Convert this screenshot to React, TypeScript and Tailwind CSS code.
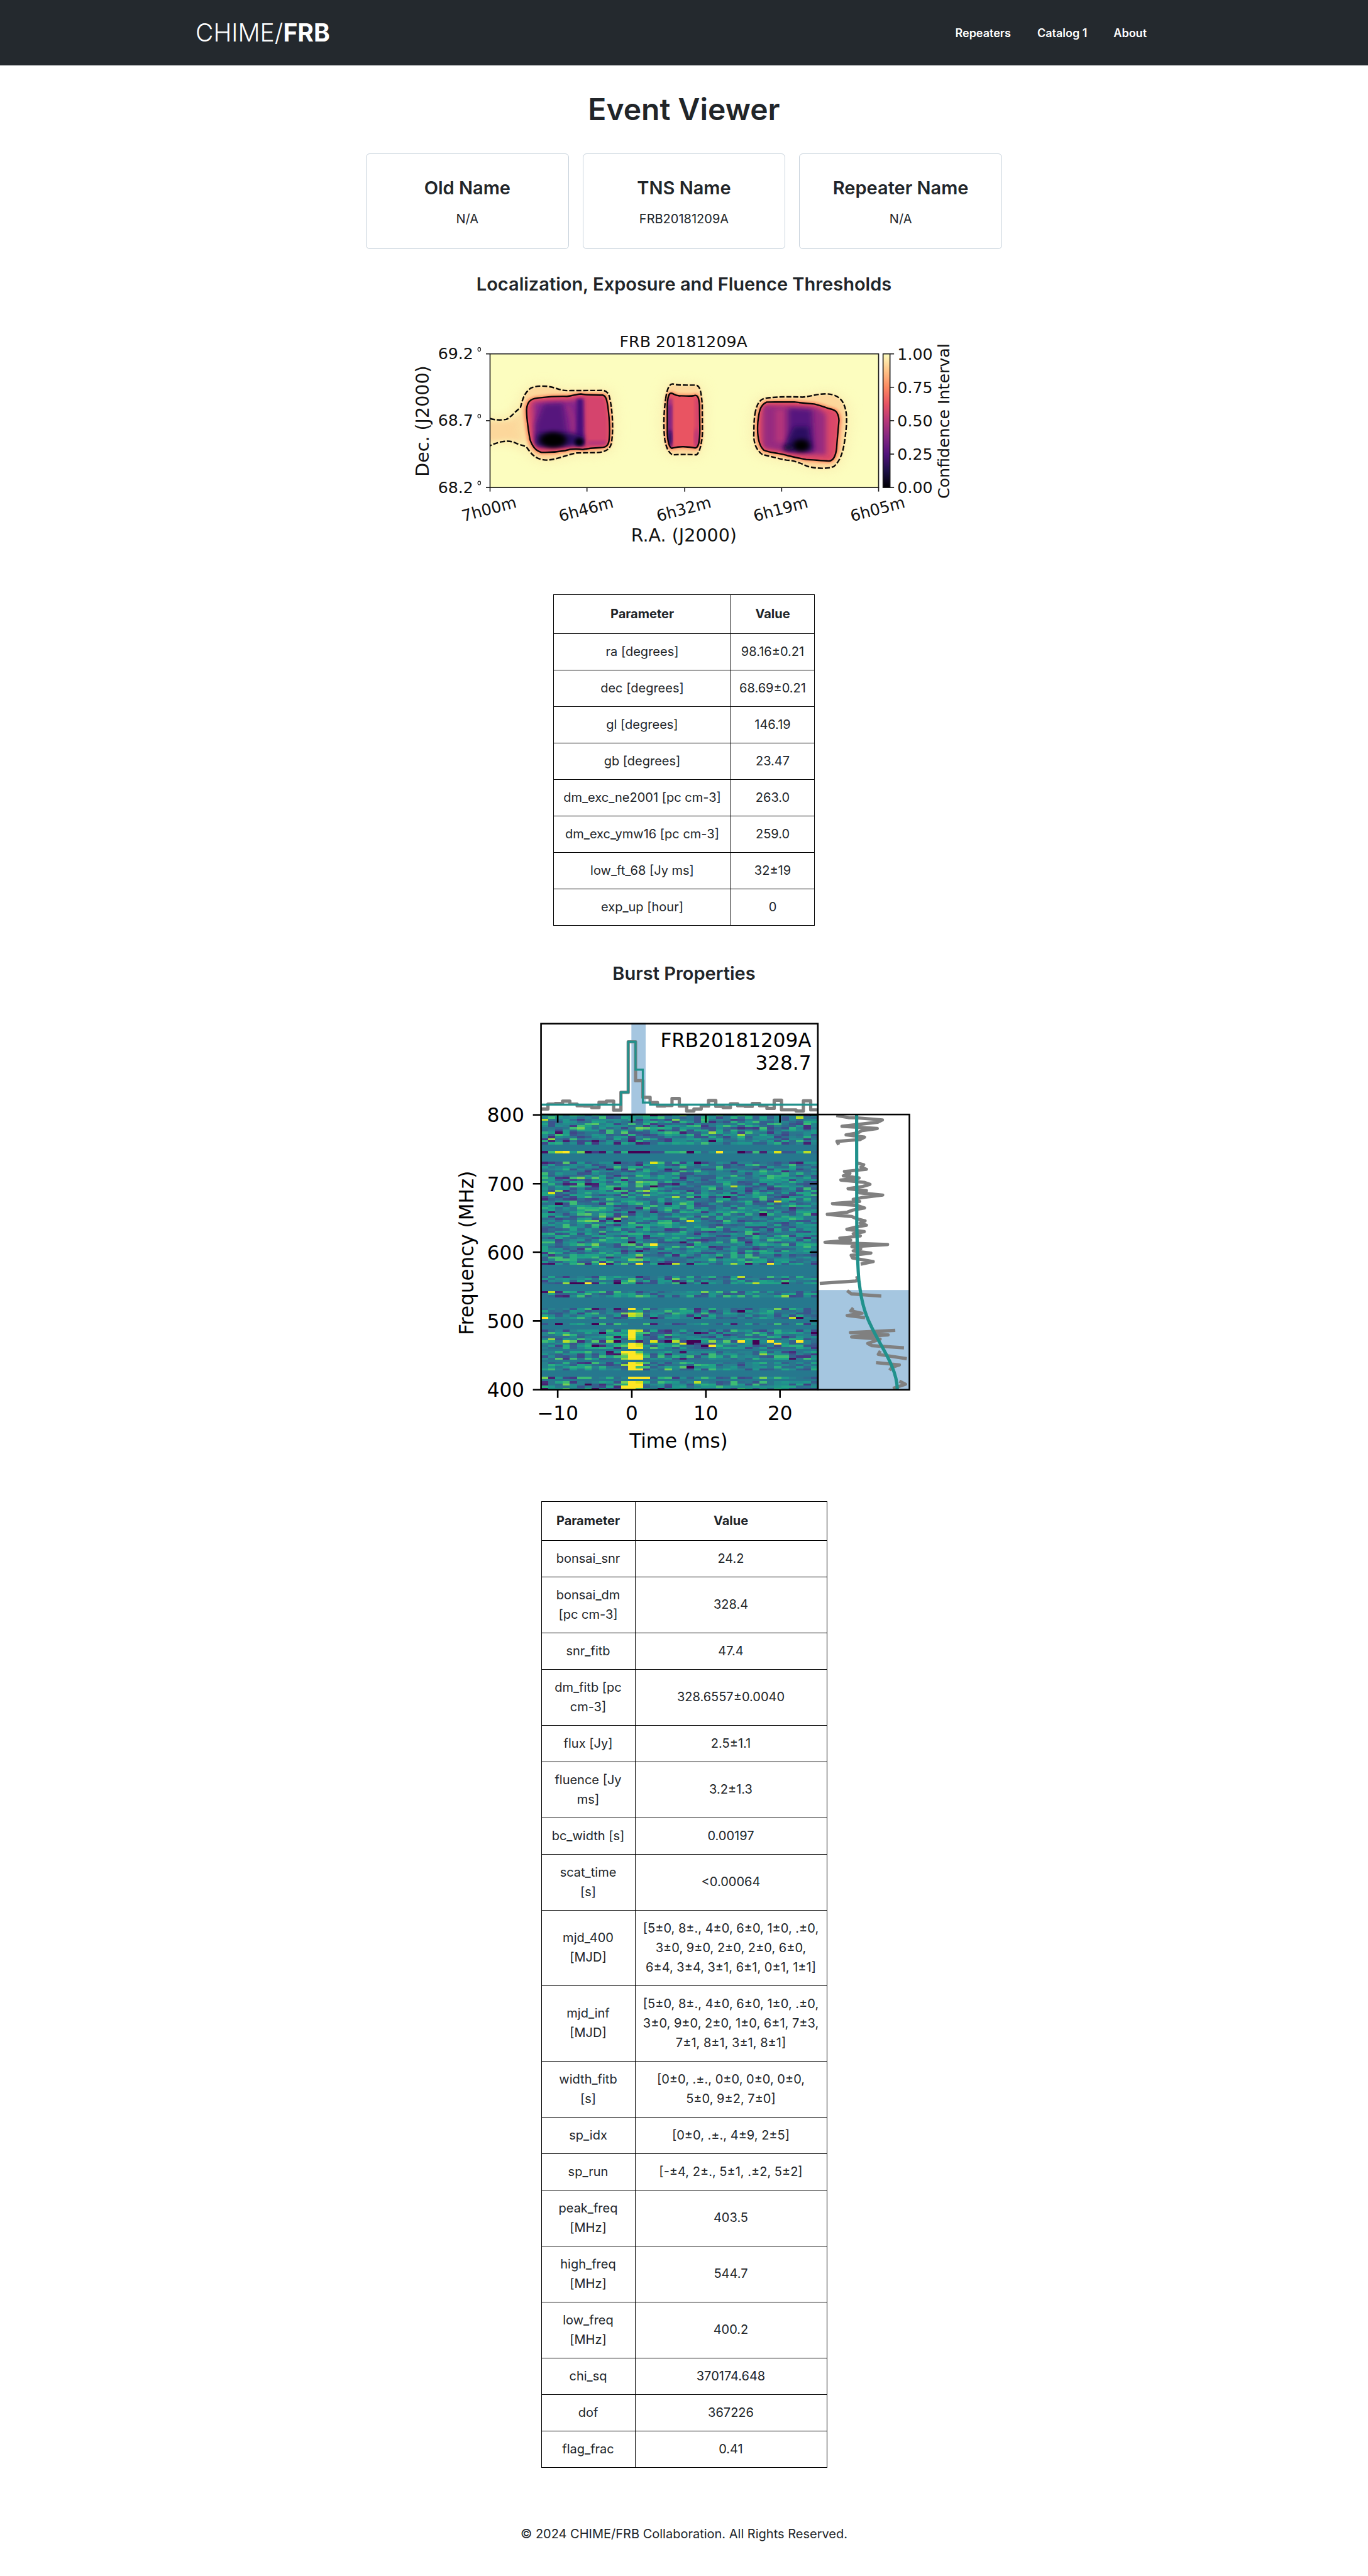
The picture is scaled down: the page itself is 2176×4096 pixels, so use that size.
import React from "react";

type Row = [string, string];

const LOCALIZATION_ROWS: Row[] = [
  ["ra [degrees]", "98.16±0.21"],
  ["dec [degrees]", "68.69±0.21"],
  ["gl [degrees]", "146.19"],
  ["gb [degrees]", "23.47"],
  ["dm_exc_ne2001 [pc cm-3]", "263.0"],
  ["dm_exc_ymw16 [pc cm-3]", "259.0"],
  ["low_ft_68 [Jy ms]", "32±19"],
  ["exp_up [hour]", "0"],
];

const BURST_ROWS: Row[] = [
  ["bonsai_snr", "24.2"],
  ["bonsai_dm [pc cm-3]", "328.4"],
  ["snr_fitb", "47.4"],
  ["dm_fitb [pc cm-3]", "328.6557±0.0040"],
  ["flux [Jy]", "2.5±1.1"],
  ["fluence [Jy ms]", "3.2±1.3"],
  ["bc_width [s]", "0.00197"],
  ["scat_time\n[s]", "<0.00064"],
  [
    "mjd_400 [MJD]",
    "[5±0, 8±., 4±0, 6±0, 1±0, .±0, 3±0, 9±0, 2±0, 2±0, 6±0, 6±4, 3±4, 3±1, 6±1, 0±1, 1±1]",
  ],
  [
    "mjd_inf [MJD]",
    "[5±0, 8±., 4±0, 6±0, 1±0, .±0, 3±0, 9±0, 2±0, 1±0, 6±1, 7±3, 7±1, 8±1, 3±1, 8±1]",
  ],
  ["width_fitb\n[s]", "[0±0, .±., 0±0, 0±0, 0±0, 5±0, 9±2, 7±0]"],
  ["sp_idx", "[0±0, .±., 4±9, 2±5]"],
  ["sp_run", "[-±4, 2±., 5±1, .±2, 5±2]"],
  ["peak_freq [MHz]", "403.5"],
  ["high_freq [MHz]", "544.7"],
  ["low_freq [MHz]", "400.2"],
  ["chi_sq", "370174.648"],
  ["dof", "367226"],
  ["flag_frac", "0.41"],
];

const CARDS: Row[] = [
  ["Old Name", "N/A"],
  ["TNS Name", "FRB20181209A"],
  ["Repeater Name", "N/A"],
];

function ParameterTable({ rows, label, className, first }: { rows: Row[]; label: string; className: string; first: string }) {
  return (
    <table aria-label={label} className={`border-collapse text-center text-[20px] leading-[31px] ${className}`}>
      <thead>
        <tr>
          <th scope="col" className={`border border-black px-3 py-[15px] font-bold ${first}`}>Parameter</th>
          <th scope="col" className="border border-black px-3 py-[15px] font-bold">Value</th>
        </tr>
      </thead>
      <tbody>
        {rows.map(([name, value]) => (
          <tr key={name}>
            <td className="border border-black px-3 py-[13px] whitespace-pre-line">{name}</td>
            <td className="border border-black px-3 py-[13px]">{value}</td>
          </tr>
        ))}
      </tbody>
    </table>
  );
}

/* ---------- localization map ---------- */

const REGION_A =
  "M645,590 C648,545 660,522 700,516 C740,510 770,503 850,505 C880,503 895,490 920,490 C945,497 1000,495 1030,497 C1048,502 1052,530 1057,570 C1064,640 1068,740 1062,795 C1058,820 1048,832 1020,834 C980,836 960,838 930,846 C890,840 860,845 840,853 C800,862 760,866 720,864 C690,855 672,820 662,780 C654,720 645,640 645,590Z";
const OUTER_A =
  "M460,647 C480,658 520,658 542,653 C565,640 590,600 614,577 C622,540 630,480 670,450 C700,435 750,435 790,452 C815,462 830,470 870,468 L1035,467 C1060,475 1065,500 1070,540 C1082,620 1085,740 1074,810 C1065,850 1040,862 1000,866 L900,868 C850,878 800,912 745,914 C690,910 670,875 650,840 C640,820 620,820 600,810 C570,790 550,790 520,796 C495,803 475,812 460,822";
const REGION_B =
  "M1358,560 C1360,510 1365,485 1378,485 C1392,488 1395,500 1420,502 C1450,500 1470,508 1495,500 C1510,493 1518,510 1521,560 L1523,720 C1522,790 1518,835 1500,836 C1480,832 1465,830 1440,828 C1410,827 1400,832 1380,838 C1365,830 1360,790 1358,740 Z";
const OUTER_B =
  "M1350,520 C1355,470 1365,425 1385,425 C1410,435 1450,433 1505,433 C1525,440 1530,480 1535,560 L1536,740 C1534,800 1522,870 1505,880 C1460,876 1420,878 1385,880 C1360,865 1350,820 1345,780 C1338,700 1340,600 1350,520Z";
const REGION_C =
  "M455,670 C460,610 465,560 500,542 C550,540 600,543 640,541 C670,546 700,550 740,554 C775,563 800,580 835,590 C860,600 865,630 866,660 C862,720 856,790 854,840 C850,880 838,918 815,920 C780,918 740,913 700,910 C650,900 600,882 560,872 C530,865 500,860 485,850 C460,820 450,760 455,670Z";
const OUTER_C =
  "M440,620 C450,550 465,520 500,516 C560,507 620,507 680,510 C730,505 740,492 800,489 C850,490 880,520 890,555 C910,610 906,680 898,760 C890,840 880,910 840,955 C800,975 740,965 710,955 C670,935 640,915 600,914 C540,900 510,885 480,880 C445,850 432,800 435,740 C435,700 436,650 440,620Z";

const MAGMA: [number, string][] = [
  [0, "#fcfdbf"],
  [0.125, "#fec488"],
  [0.25, "#fc8961"],
  [0.375, "#e75263"],
  [0.5, "#b73779"],
  [0.625, "#832681"],
  [0.75, "#51127c"],
  [0.875, "#1d1147"],
  [1, "#000004"],
];

const RA_TICKS: [number, string][] = [
  [1203, "7h00m"],
  [1441, "6h46m"],
  [1681, "6h32m"],
  [1919, "6h19m"],
  [2157, "6h05m"],
];
const DEC_TICKS: [number, string][] = [
  [869, "69.2"],
  [1033, "68.7"],
  [1197, "68.2"],
];
const BAR_TICKS: [number, string][] = [
  [869, "1.00"],
  [951, "0.75"],
  [1033, "0.50"],
  [1115, "0.25"],
  [1197, "0.00"],
];

function Halo({ outer, inner }: { outer: string; inner: string }) {
  return (
    <>
      <path d={outer} fill="#fbeaab" stroke="#fbeaab" strokeWidth="44" filter="url(#blur30)" opacity="0.55" />
      <path d={outer} fill="#fdd79b" filter="url(#blur8)" />
      <path d={inner} fill="#fc8961" stroke="#fc8961" strokeWidth="24" filter="url(#blur8)" />
    </>
  );
}

function Contours({ outer, inner }: { outer: string; inner: string }) {
  return (
    <g fill="none" stroke="#080808" strokeWidth="2.4">
      <path d={inner} vectorEffect="non-scaling-stroke" />
      <path d={outer} vectorEffect="non-scaling-stroke" strokeDasharray="8 3" />
    </g>
  );
}

function LocalizationPlot() {
  return (
    <svg
      viewBox="980 780 1400 600"
      role="img"
      aria-label="FRB 20181209A localization"
      className="mt-[35px] w-full max-w-[907px] font-['DejaVu_Sans',sans-serif]"
    >
      <defs>
        <linearGradient id="magma" x1="0" y1="0" x2="0" y2="1">
          {MAGMA.map(([o, c]) => (
            <stop key={o} offset={o} stopColor={c} />
          ))}
        </linearGradient>
        <filter id="blur8" x="-30%" y="-30%" width="160%" height="160%"><feGaussianBlur stdDeviation="8" /></filter>
        <filter id="blur14" x="-60%" y="-60%" width="220%" height="220%"><feGaussianBlur stdDeviation="14" /></filter>
        <filter id="blur30" x="-60%" y="-60%" width="220%" height="220%"><feGaussianBlur stdDeviation="30" /></filter>
        <clipPath id="axes"><rect x="1203" y="869" width="954" height="328" /></clipPath>
        <clipPath id="clipA"><path d={REGION_A} /></clipPath>
        <clipPath id="clipB"><path d={REGION_B} /></clipPath>
        <clipPath id="clipC"><path d={REGION_C} /></clipPath>
      </defs>

      <g clipPath="url(#axes)">
        <rect x="1203" y="869" width="954" height="328" fill="#fcfdbf" />
        <g transform="translate(980 780) scale(0.4847 0.3827)">
          <path d="M380,640 L540,640 L640,540 L640,850 L540,800 L380,830Z" fill="#fbeaab" filter="url(#blur30)" />
          <path d="M380,670 L560,665 L640,590 L640,800 L560,780 L380,800Z" fill="#fcd79b" filter="url(#blur14)" />
          <Halo outer={`M614,577 ${OUTER_A.slice(OUTER_A.indexOf("C622"), OUTER_A.indexOf("C640,820"))}Z`} inner={REGION_A} />
          <Halo outer={OUTER_B} inner={REGION_B} />
          <g clipPath="url(#clipA)">
            <rect x="620" y="460" width="480" height="430" fill="#d5446d" />
            <path d="M680,545 L860,535 L930,520 L930,820 L690,820Z" fill="#87278a" filter="url(#blur14)" />
            <path d="M730,555 L830,550 L860,820 L695,820 L690,690Z" fill="#56147d" filter="url(#blur14)" />
            <path d="M900,520 L932,520 L936,820 L895,820Z" fill="#4a107a" filter="url(#blur8)" />
            <path d="M860,560 C895,620 895,730 875,790 L862,780 C878,720 870,640 845,570Z" fill="#962c80" filter="url(#blur8)" />
            <path d="M700,740 L870,740 L930,760 L935,822 L690,822Z" fill="#2a0f61" filter="url(#blur14)" />
            <ellipse cx="780" cy="785" rx="68" ry="50" fill="#000004" filter="url(#blur14)" />
            <ellipse cx="912" cy="797" rx="22" ry="26" fill="#02020d" filter="url(#blur8)" />
            <rect x="955" y="790" width="100" height="30" fill="#b73779" filter="url(#blur8)" />
            <path d={REGION_A} fill="none" stroke="#ee5b5e" strokeWidth="14" filter="url(#blur8)" />
          </g>
          <g clipPath="url(#clipB)">
            <rect x="1340" y="460" width="200" height="400" fill="#e95462" />
            <rect x="1358" y="520" width="26" height="320" fill="#a3307e" filter="url(#blur8)" />
            <rect x="1360" y="560" width="20" height="240" fill="#7a2281" filter="url(#blur8)" />
            <ellipse cx="1371" cy="775" rx="10" ry="55" fill="#2a0f61" filter="url(#blur8)" />
            <ellipse cx="1508" cy="770" rx="12" ry="60" fill="#a8327d" filter="url(#blur8)" />
            <rect x="1498" y="520" width="26" height="300" fill="#cb3e71" opacity="0.7" filter="url(#blur8)" />
          </g>
          <Contours outer={OUTER_A} inner={REGION_A} />
          <Contours outer={OUTER_B} inner={REGION_B} />
        </g>
        <g transform="translate(1640 780) scale(0.4847 0.3827)">
          <Halo outer={OUTER_C} inner={REGION_C} />
          <g clipPath="url(#clipC)">
            <rect x="430" y="520" width="460" height="420" fill="#da4769" />
            <path d="M480,560 L760,580 L800,620 L800,880 L640,870 L480,835Z" fill="#962c80" filter="url(#blur14)" />
            <rect x="545" y="590" width="45" height="210" fill="#b5367a" filter="url(#blur14)" />
            <path d="M610,580 L730,590 L740,850 L610,850Z" fill="#57157e" filter="url(#blur14)" />
            <path d="M640,700 L710,700 L730,860 L590,850 L600,800Z" fill="#2a0f61" filter="url(#blur14)" />
            <ellipse cx="675" cy="820" rx="42" ry="40" fill="#000004" filter="url(#blur14)" />
            <ellipse cx="612" cy="835" rx="26" ry="16" fill="#120d31" filter="url(#blur14)" />
            <path d={REGION_C} fill="none" stroke="#ee5b5e" strokeWidth="12" filter="url(#blur8)" />
          </g>
          <Contours outer={OUTER_C} inner={REGION_C} />
        </g>
      </g>

      <g fill="none" stroke="#1a1a1a" strokeWidth="2.5">
        <rect x="1203" y="869" width="954" height="328" />
        <rect x="2168" y="869" width="17" height="328" fill="url(#magma)" />
        {RA_TICKS.map(([x]) => <path key={x} d={`M${x} 1197V1207`} />)}
        {DEC_TICKS.map(([y]) => <path key={y} d={`M1193 ${y}H1203`} />)}
        {BAR_TICKS.map(([y]) => <path key={y} d={`M2185 ${y}H2195`} />)}
      </g>

      <g fill="#111" fontSize="39">
        <text x="1678" y="852" textAnchor="middle">FRB 20181209A</text>
        {DEC_TICKS.map(([y, t]) => (
          <React.Fragment key={y}>
            <text x="1162" y={y + 13} textAnchor="end">{t}</text>
            <ellipse cx="1176.5" cy={y - 11} rx="3.5" ry="4.5" fill="none" stroke="#111" strokeWidth="1.6" />
          </React.Fragment>
        ))}
        {RA_TICKS.map(([x, t]) => (
          <text key={x} transform={`translate(${x + 1} 1263) rotate(-15)`} textAnchor="middle">{t}</text>
        ))}
        {BAR_TICKS.map(([y, t]) => <text key={y} x="2203" y={y + 14}>{t}</text>)}
        <text transform="translate(2330 1034) rotate(-90)" textAnchor="middle">Confidence Interval</text>
        <text x="1679" y="1330" textAnchor="middle" fontSize="44">R.A. (J2000)</text>
        <text transform="translate(1052 1034) rotate(-90)" textAnchor="middle" fontSize="44">Dec. (J2000)</text>
      </g>
    </svg>
  );
}

/* ---------- dynamic spectrum ---------- */

const VIRIDIS = [
  "#440154", "#471164", "#482071", "#472e7c", "#443b84", "#3f4889", "#3a548c", "#34608d", "#2f6c8e", "#2a768e",
  "#26828e", "#228c8d", "#1f978b", "#20a386", "#29af7f", "#3dbc74", "#56c667", "#75d054", "#95d840", "#bade28",
  "#dde318", "#fde725",
];

const MASKED = new Set([
  14, 15, 16, 18, 19, 20, 21, 70, 71, 72, 73, 74, 79, 80, 81, 85, 86, 87, 88, 89, 95, 96, 98, 99, 109, 114, 119, 120,
  121, 123,
]);

const COLS = 38;
const ROWS = 128;

/* Channel rows with strong cells: "column:level" pairs, level indexes VIRIDIS. */
const STRONG: Record<number, string> = {
  0: "15:0 19:17",
  1: "35:19 8:15",
  2: "0:19 18:17",
  4: "6:15 7:16",
  6: "4:15 5:17 13:17 14:16",
  8: "2:1 9:15 11:16 19:2 23:18",
  9: "27:18",
  11: "1:18 4:15",
  12: "1:2 3:2 7:1 12:2 13:14 23:0",
  13: "10:2 13:2 14:3 36:2",
  17: "0:1 1:15 2:20 3:21 4:12 5:17 6:0 7:4 8:1 9:12 10:3 11:14 12:0 13:0 14:0 15:6 17:14 19:15 20:0 24:21 27:0 30:2 32:20 36:19",
  22: "0:2 3:16 10:0 15:20 19:5 21:0 35:2",
  25: "9:2 17:2",
  29: "5:17 7:16 0:15",
  31: "13:17 14:15",
  32: "3:2 6:1 7:2 18:2",
  33: "4:15 9:15 13:16 15:0 26:19",
  34: "10:1 15:15",
  35: "2:17 14:18",
  36: "1:20",
  37: "14:17",
  38: "18:18 6:15 25:0",
  40: "32:20",
  41: "2:0 17:2 19:16",
  45: "1:2 12:2",
  46: "6:16 8:15 30:0",
  47: "8:17 11:17",
  48: "10:17 9:2",
  49: "10:0 20:20 6:17 7:17",
  59: "12:0 19:1",
  60: "7:17 12:16 15:21",
  63: "13:1",
  65: "13:17",
  67: "12:17 13:17 2:15 3:15",
  69: "0:2 1:1 5:16 6:3 8:21 9:2 11:16 13:21 16:0 17:1 18:19 20:1 26:18 28:1 31:21",
  75: "27:19 3:4",
  76: "12:15 18:17",
  77: "10:2 12:17",
  78: "3:18 4:0 5:0 6:21 7:2 10:0 13:3 19:0 22:1 29:19 33:0",
  82: "0:1 1:19 8:15 22:17",
  84: "2:3 3:2 13:16 33:18",
  90: "7:1 10:1 12:21 32:17",
  91: "17:15 27:0",
  92: "11:17 12:20 13:18 18:15",
  93: "12:19 13:17",
  94: "0:21 15:1 5:15 21:0 34:19 35:0",
  97: "2:0 7:0 8:15 10:15 15:2 26:2",
  100: "12:21 13:19 9:15",
  101: "8:0 12:21 13:15 21:0 37:0",
  102: "3:17 12:21 13:14",
  103: "10:1 12:21 13:13",
  104: "1:18 12:20 13:13 5:15",
  105: "0:15 3:19 4:16 5:3 7:16 8:4 9:18 10:0 13:2 15:20 17:0 18:19 20:0 21:0 23:18 25:16 27:21 29:0 31:21 35:21",
  106: "12:21 13:19 19:20 29:0 32:21 20:0",
  107: "7:0 11:16 12:21 13:20 22:0 23:21",
  108: "12:21 13:21 10:2 15:16",
  110: "9:1 11:21 12:21 13:16 19:1",
  111: "9:2 10:1 11:18 12:21 13:20 30:18",
  112: "11:16 12:21 13:21 8:15",
  113: "2:16 4:15 11:18 12:21 13:21 19:2 34:1",
  115: "12:21 13:19 14:15",
  116: "11:18 12:21 13:21",
  117: "12:21 13:15 14:15 19:16 20:0",
  118: "12:21 13:21 17:17",
  122: "0:17 1:2 5:15 12:21 13:21 14:21 17:15 30:17",
  124: "11:17 12:21 13:20 0:3 21:19",
  125: "0:2 3:17 6:0 12:21 13:21 11:14",
  126: "11:21 12:21 13:21 10:3",
  127: "0:1 3:16 7:1 11:21 12:21 13:16 16:0",
};

function buildWaterfall(): string[] {
  const paths = VIRIDIS.map(() => "");
  let seed = 20181209;
  const rand = () => {
    seed = (Math.imul(seed, 1664525) + 1013904223) >>> 0;
    return seed / 4294967296;
  };
  for (let r = 0; r < ROWS; r++) {
    const strong = new Map((STRONG[r] ?? "").split(" ").filter(Boolean).map((p) => p.split(":").map(Number) as [number, number]));
    const y0 = r === 0 ? 2736 : 2740 + (r - 1) * 5.286;
    const y1 = Math.min(3411, 2740 + r * 5.286);
    for (let c = 0; c < COLS; c++) {
      const g = (rand() + rand() + rand() + rand() - 2) * 5 + 9.8;
      if (MASKED.has(r)) continue;
      const level = strong.get(c) ?? Math.max(3, Math.min(15, Math.round(g)));
      const x0 = c === 0 ? 1328 : 1345 + (c - 1) * 17.93;
      const x1 = Math.min(2008, 1345 + c * 17.93);
      paths[level] += `M${x0.toFixed(1)} ${y0.toFixed(1)}H${x1.toFixed(1)}V${y1.toFixed(1)}H${x0.toFixed(1)}Z`;
    }
  }
  return paths;
}

const WATERFALL = buildWaterfall();

const PROFILE = [
  338, 321, 319, 311, 321, 327, 328, 333, 315, 311, 342, 281, 107, 241, 298, 316, 328, 326, 302, 328, 345, 338, 328, 309,
  329, 333, 320, 327, 329, 319, 327, 336, 308, 341, 341, 345, 310, 341,
];
const MODEL = PROFILE.map((_, i) => (i === 11 ? 281 : i === 12 ? 107 : i === 13 ? 203 : i === 14 ? 316 : 323));

function steps(levels: number[]): string {
  return levels
    .map((v, i) => {
      const x1 = Math.min(2008, 1345 + i * 17.93).toFixed(1);
      const y = (2480 + v / 1.4).toFixed(1);
      return `${i === 0 ? `M1328 ${y}` : `V${y}`}H${x1}`;
    })
    .join("");
}

const SPECTRUM = [
  "190,52 280,68 345,70 530,85 495,102 232,132 492,148 375,165 350,180 262,195 398,212 365,230 195,243 208,268",
  "342,402 392,415 372,432 412,449 250,465 290,480 242,497 358,513 224,528 395,545 438,560 385,575 277,592 412,607 360,622 532,639 380,657 315,670 362,686 162,702 340,715 398,734 310,750 270,765 124,781 305,797 345,815 402,829 365,845 412,861 345,872 268,891 396,908 315,924 367,940 216,956 296,971 107,987 568,1003 305,1019 370,1035 315,1050 445,1066 300,1083 310,1102 462,1129 370,1148",
  "340,1236 348,1258 335,1272 68,1289",
  "270,1343 302,1367 522,1383",
  "315,1470 297,1492 380,1510 270,1526 402,1542",
  "625,1636 294,1652 572,1669 303,1684 513,1700 422,1732 452,1748 689,1764",
  "515,1787 500,1812 710,1844",
  "483,1873 655,1890 600,1908 583,1930",
  "655,2010 700,2033 607,2063",
];

const FREQ_TICKS: [number, string][] = [
  [2736, "800"],
  [2905, "700"],
  [3073, "600"],
  [3242, "500"],
  [3411, "400"],
];
const TIME_TICKS: [number, string][] = [
  [1369, "−10"],
  [1551, "0"],
  [1733, "10"],
  [1915, "20"],
];

function BurstPlot() {
  return (
    <svg
      viewBox="1080 2480 1200 1120"
      role="img"
      aria-label="FRB20181209A dynamic spectrum"
      className="mt-[41px] w-full max-w-[777px] font-['DejaVu_Sans',sans-serif]"
    >
      <defs>
        <clipPath id="profile"><rect x="1328" y="2510" width="680" height="225" /></clipPath>
        <clipPath id="spectrum"><rect x="2008" y="2736" width="226" height="675" /></clipPath>
      </defs>

      <rect x="1328" y="2736" width="680" height="675" fill="#26788e" />
      <g shapeRendering="crispEdges">
        {WATERFALL.map((d, i) => (d ? <path key={i} d={d} fill={VIRIDIS[i]} /> : null))}
      </g>

      <rect x="1550" y="2510" width="35" height="225" fill="#a5c6e0" />
      <g clipPath="url(#profile)" fill="none" strokeLinejoin="round">
        <path d={steps(PROFILE)} stroke="#808080" strokeWidth="8" />
        <path d={steps(MODEL)} stroke="#21918c" strokeWidth="5" strokeLinejoin="miter" />
      </g>

      <rect x="2008" y="3166" width="226" height="245" fill="#a5c6e0" />
      <g clipPath="url(#spectrum)">
        <g transform="translate(1990 2720) scale(0.3333)" fill="none" strokeWidth="24" strokeLinejoin="round">
          {SPECTRUM.map((points) => <polyline key={points} points={points} stroke="#808080" />)}
          <path
            d="M340,40 L341,850 C345,1050 350,1250 360,1290 C372,1400 395,1500 440,1590 C500,1720 560,1800 600,1900 C630,1970 640,2020 640,2080"
            stroke="#21918c"
          />
        </g>
      </g>

      <g fill="none" stroke="#000" strokeWidth="4">
        <rect x="1328" y="2512" width="680" height="223" />
        <rect x="1328" y="2735" width="680" height="676" />
        <rect x="2008" y="2735" width="225" height="676" />
        {FREQ_TICKS.map(([y]) => <path key={y} d={`M1308 ${y}H1328M1988 ${y}H2008`} />)}
        {TIME_TICKS.map(([x]) => <path key={x} d={`M${x} 3411V3431M${x} 2736V2755`} />)}
      </g>

      <g fill="#000" fontSize="48">
        {FREQ_TICKS.map(([y, t]) => <text key={y} x="1287" y={y + 18} textAnchor="end">{t}</text>)}
        {TIME_TICKS.map(([x, t]) => <text key={x} x={x} y="3486" textAnchor="middle">{t}</text>)}
        <text x="1666" y="3554" textAnchor="middle">Time (ms)</text>
        <text transform="translate(1162 3075) rotate(-90)" textAnchor="middle">Frequency (MHz)</text>
        <text x="1992" y="2570" textAnchor="end">FRB20181209A</text>
        <text x="1992" y="2625" textAnchor="end">328.7</text>
      </g>
    </svg>
  );
}

export default function App() {
  return (
    <div className="bg-white font-['Inter',sans-serif] text-[20px] leading-[31px] text-[#212529]">
      <header className="bg-[#24292e] text-white">
        <div className="mx-auto flex h-[104px] max-w-[1554px] items-center justify-between pr-5">
          <a href="#home" className="text-[39px] leading-[52px] font-light">
            CHIME/<span className="font-bold">FRB</span>
          </a>
          <nav aria-label="Main" className="flex text-[18px] font-semibold">
            <a href="#repeaters" className="px-[21px]">Repeaters</a>
            <a href="#catalog" className="px-[21px]">Catalog 1</a>
            <a href="#about" className="px-[21px]">About</a>
          </nav>
        </div>
      </header>

      <main className="flex flex-col items-center pt-10">
        <h1 className="text-[48px] leading-[60px] font-semibold">Event Viewer</h1>

        <section aria-label="Names" className="mt-10 grid w-full max-w-[1012px] grid-cols-3 gap-[22px]">
          {CARDS.map(([title, value]) => (
            <div key={title} className="rounded-md border border-[#c6d1db] pt-9 pb-[31px] text-center">
              <h2 className="text-[29px] leading-[36px] font-semibold">{title}</h2>
              <p className="mt-4">{value}</p>
            </div>
          ))}
        </section>

        <h2 className="mt-[38px] text-[29px] leading-[36px] font-semibold">
          Localization, Exposure and Fluence Thresholds
        </h2>
        <LocalizationPlot />
        <ParameterTable
          rows={LOCALIZATION_ROWS}
          label="Localization parameters"
          className="mt-[51px] w-[416px]"
          first="w-[282px]"
        />

        <h2 className="mt-[58px] text-[29px] leading-[36px] font-semibold">Burst Properties</h2>
        <BurstPlot />
        <ParameterTable
          rows={BURST_ROWS}
          label="Burst parameters"
          className="mt-[55px] w-[455px] table-fixed"
          first="w-[149px]"
        />
      </main>

      <footer className="pt-[90px] pb-[50px] text-center">© 2024 CHIME/FRB Collaboration. All Rights Reserved.</footer>
    </div>
  );
}
